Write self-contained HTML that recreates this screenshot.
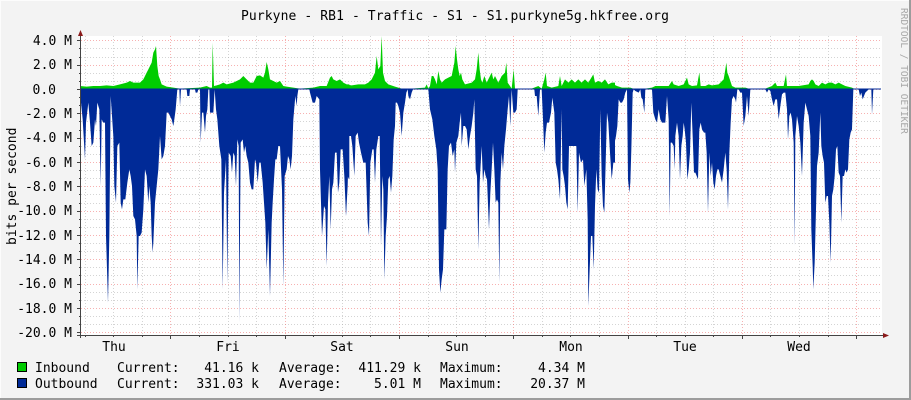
<!DOCTYPE html>
<html><head><meta charset="utf-8"><style>
html,body{margin:0;padding:0;background:#f3f3f3}
svg{display:block}
text{font-family:"DejaVu Sans Mono","Liberation Mono",monospace;font-size:13px;fill:#000}
</style></head><body>
<svg width="911" height="400" viewBox="0 0 911 400" xmlns="http://www.w3.org/2000/svg">
<rect x="0" y="0" width="911" height="400" fill="#f3f3f3"/>
<rect x="909" y="0" width="2" height="400" fill="#9c9c9c"/>
<rect x="0" y="398" width="911" height="2" fill="#9c9c9c"/>
<rect x="0" y="0" width="909" height="1" fill="#fcfcfc"/>
<rect x="0" y="0" width="1" height="398" fill="#fcfcfc"/>
<rect x="81" y="36" width="801" height="299" fill="#ffffff"/>
<g id="grid2"></g>
<g transform="translate(80,36) scale(0.33333)">
<polygon fill="#00cc00" points="0,160 0,150 20,152 40,150 60,150 80,148 100,150 120,145 140,140 150,135 160,140 170,140 180,140 190,130 200,110 205,100 210,90 215,80 220,50 225,40 228,30 232,90 236,120 240,130 245,145 260,152 280,155 300,158 360,155 380,150 390,155 396,155 398,20 402,150 410,148 420,145 430,140 440,145 460,140 480,130 490,120 500,130 510,140 520,140 530,120 540,118 550,125 555,110 560,78 565,100 570,130 580,135 590,140 600,135 610,150 620,152 640,155 660,158 700,155 720,150 740,150 750,125 755,120 760,130 770,135 780,130 790,140 800,145 808,145 808,160"/>
<polygon fill="#002a97" points="0,160 3,200 8,250 15,370 18,260 25,200 30,260 35,330 40,320 45,250 48,270 52,200 58,220 62,450 65,250 70,260 75,260 78,600 84,800 88,600 92,180 96,240 100,300 103,450 108,500 112,330 118,320 122,500 126,520 130,490 136,490 142,440 148,400 152,420 156,450 160,540 165,550 170,600 172,760 176,600 180,600 185,590 190,520 195,400 200,420 205,500 208,450 212,500 215,600 218,650 220,620 225,500 230,450 235,400 240,300 245,370 250,360 255,330 260,230 265,230 270,240 275,250 280,270 283,250 287,220 292,160 298,160 300,210 303,160 320,160 322,180 328,180 330,160 345,160 347,170 352,170 355,160 360,160 362,320 366,230 370,230 375,290 378,240 382,220 385,160 388,160 390,230 395,230 400,230 404,160 408,220 412,250 418,330 424,370 428,760 432,470 438,370 442,740 446,350 452,360 456,410 460,350 464,360 468,450 472,310 476,330 478,860 482,320 488,310 492,350 496,330 500,360 505,380 510,440 515,460 520,460 525,370 528,380 533,440 538,380 542,380 548,440 552,500 556,560 560,700 565,580 570,780 575,560 578,500 582,430 586,370 590,370 595,330 600,330 606,460 610,750 614,420 620,400 624,360 628,370 632,400 636,360 640,250 646,180 650,210 652,180 655,160 688,160 690,170 698,200 705,200 710,180 718,190 720,400 726,600 732,510 736,520 740,690 744,500 748,420 752,580 756,460 760,440 765,350 770,350 774,470 778,440 782,340 788,340 793,420 798,540 802,420 808,430 808,160"/>
</g>
<g transform="translate(345,36) scale(0.33333)">
<polygon fill="#00cc00" points="0,160 0,145 20,148 40,145 60,145 70,140 80,130 90,110 95,60 100,100 106,90 110,0 114,110 120,135 130,145 150,152 170,158 200,158 240,155 245,145 250,158 255,150 260,120 265,120 270,130 275,145 280,105 285,130 290,140 300,130 310,125 320,120 328,80 332,30 336,70 340,100 344,120 348,110 352,130 360,145 380,140 390,130 395,100 400,50 404,100 408,130 412,140 418,120 425,140 435,120 440,110 445,130 450,120 460,140 470,120 480,110 484,80 488,140 495,150 500,158 506,100 510,158 560,158 580,150 590,158 598,130 602,110 606,150 620,155 640,150 645,120 650,150 660,130 670,140 680,130 690,140 700,130 710,140 720,130 730,140 745,115 750,140 760,135 770,140 780,130 790,145 800,140 810,140 810,160"/>
<polygon fill="#002a97" points="0,160 0,350 3,540 8,450 12,300 18,300 22,330 28,420 32,300 38,290 42,320 48,350 55,380 62,380 68,560 72,600 76,380 82,340 86,340 90,440 94,340 100,300 104,300 108,630 112,420 115,460 118,730 122,600 126,540 130,430 134,420 138,470 142,420 146,310 150,270 152,200 156,200 160,210 165,230 170,300 175,230 180,200 184,170 188,160 190,180 195,190 200,170 204,160 250,160 255,220 262,250 268,300 274,340 278,400 282,700 286,770 290,730 294,700 298,580 304,580 308,400 312,330 318,320 323,360 328,340 330,410 334,320 340,300 344,260 348,230 350,330 355,270 360,270 365,280 370,340 375,300 380,270 385,230 388,190 392,400 396,420 400,640 404,440 410,330 414,440 418,400 422,420 426,430 432,580 436,470 440,400 444,320 448,400 452,500 456,490 460,500 463,740 466,440 470,350 474,400 478,330 483,280 488,220 492,180 496,270 500,160 505,230 510,230 515,220 518,160 568,160 570,180 575,180 580,240 585,160 590,160 594,250 598,350 602,290 606,260 612,260 618,230 622,185 628,230 632,380 636,400 640,430 645,490 650,220 652,400 656,420 660,450 664,500 668,520 672,330 680,330 690,330 694,330 698,530 702,350 708,380 714,370 718,450 724,400 728,550 730,810 734,700 738,600 742,600 746,700 750,510 754,400 758,460 762,470 766,220 770,420 774,510 778,530 782,380 786,230 790,260 795,350 800,430 805,380 810,380 810,160"/>
</g>
<g transform="translate(612,36) scale(0.33333)">
<polygon fill="#00cc00" points="0,160 0,140 5,145 15,150 30,155 45,155 55,155 70,160 100,158 120,155 130,150 150,150 170,150 180,135 185,145 200,150 215,145 225,125 230,145 240,150 255,148 262,110 266,150 280,150 290,145 300,148 320,145 330,135 335,130 340,100 343,80 346,110 350,120 355,135 360,150 370,155 380,155 400,155 410,158 420,160 460,158 480,150 490,140 495,150 515,150 522,115 525,150 540,150 560,150 590,145 595,135 600,130 605,135 610,145 620,150 630,140 640,145 650,140 660,140 670,145 680,140 690,145 700,150 720,155 730,160"/>
<polygon fill="#002a97" points="0,160 0,420 4,370 8,320 12,300 16,270 20,190 25,200 30,200 35,190 40,170 45,160 48,430 52,470 55,440 58,340 62,170 65,160 70,165 80,170 85,160 88,185 92,190 97,230 100,160 120,160 124,230 130,250 135,260 140,220 145,250 150,260 155,260 160,260 165,180 170,250 173,540 176,320 180,320 185,330 188,400 190,300 195,260 200,300 204,430 208,330 212,300 215,260 218,280 222,320 226,430 230,400 234,350 238,200 242,300 246,410 250,410 254,420 258,430 262,280 266,260 270,280 276,290 280,290 284,350 288,530 292,350 296,420 300,380 304,440 308,460 312,420 316,400 320,400 325,420 330,440 335,400 340,350 344,400 348,520 352,350 356,260 360,190 365,180 370,190 372,200 376,160 380,160 385,170 390,170 395,270 400,240 405,180 410,240 415,160 460,160 465,170 470,160 475,165 480,190 485,210 490,190 495,190 500,250 505,210 510,175 515,170 520,170 525,220 528,310 532,240 536,230 540,250 545,320 548,630 550,300 555,240 560,270 565,320 570,420 575,260 580,200 585,220 590,240 595,300 598,580 602,690 604,760 608,680 612,520 615,390 620,350 625,230 628,330 632,360 636,380 640,500 644,480 648,480 652,560 656,680 660,480 664,460 668,420 672,340 676,330 680,410 684,420 688,560 692,420 696,420 700,400 704,410 708,400 712,310 716,290 720,280 724,160 740,160 744,180 748,170 752,190 756,180 760,170 770,160 778,160 780,235 784,160 810,160"/>
</g>
<line x1="81" y1="89" x2="881" y2="89" stroke="#002a97" stroke-width="1"/>
<line x1="80.5" y1="32" x2="80.5" y2="338" stroke="#444" stroke-width="1"/>
<line x1="77" y1="335.5" x2="884" y2="335.5" stroke="#444" stroke-width="1"/>
<polygon points="78,36 83,36 80.5,30" fill="#8b1a1a"/>
<polygon points="883,333 883,338 889,335.5" fill="#8b1a1a"/>
<g id="ticks" stroke="#444" stroke-width="1"></g>
<text x="455" y="20" text-anchor="middle" style="letter-spacing:0.1px">Purkyne - RB1 - Traffic - S1 - S1.purkyne5g.hkfree.org</text>
<text transform="translate(901,8) rotate(90)" style="font-size:9.5px;fill:#a8a8a8">RRDTOOL / TOBI OETIKER</text>
<text transform="translate(16,245) rotate(-90)">bits per second</text>
<g text-anchor="end">
<text x="72" y="45">4.0 M</text>
<text x="72" y="69">2.0 M</text>
<text x="56" y="94">0.0</text>
<text x="72" y="118">-2.0 M</text>
<text x="72" y="142">-4.0 M</text>
<text x="72" y="167">-6.0 M</text>
<text x="72" y="191">-8.0 M</text>
<text x="72" y="215">-10.0 M</text>
<text x="72" y="240">-12.0 M</text>
<text x="72" y="264">-14.0 M</text>
<text x="72" y="288">-16.0 M</text>
<text x="72" y="313">-18.0 M</text>
<text x="72" y="337">-20.0 M</text>
</g>
<g text-anchor="middle">
<text x="114" y="351">Thu</text>
<text x="228" y="351">Fri</text>
<text x="342" y="351">Sat</text>
<text x="457" y="351">Sun</text>
<text x="571" y="351">Mon</text>
<text x="685" y="351">Tue</text>
<text x="799" y="351">Wed</text>
</g>
<rect x="17.5" y="362.5" width="9" height="9" fill="#00cc00" stroke="#000"/>
<rect x="17.5" y="378.5" width="9" height="9" fill="#002a97" stroke="#000"/>
<text x="35" y="372">Inbound</text>
<text x="117" y="372">Current:</text>
<text x="259" y="372" text-anchor="end">41.16 k</text>
<text x="279" y="372">Average:</text>
<text x="421" y="372" text-anchor="end">411.29 k</text>
<text x="440" y="372">Maximum:</text>
<text x="585" y="372" text-anchor="end">4.34 M</text>
<text x="35" y="388">Outbound</text>
<text x="117" y="388">Current:</text>
<text x="259" y="388" text-anchor="end">331.03 k</text>
<text x="279" y="388">Average:</text>
<text x="421" y="388" text-anchor="end">5.01 M</text>
<text x="440" y="388">Maximum:</text>
<text x="585" y="388" text-anchor="end">20.37 M</text>
<script>
(function(){
var ns="http://www.w3.org/2000/svg";
var g=document.getElementById("grid2");var t=document.getElementById("ticks");
function L(p,x1,y1,x2,y2,c,d){var l=document.createElementNS(ns,"line");l.setAttribute("x1",x1);l.setAttribute("y1",y1);l.setAttribute("x2",x2);l.setAttribute("y2",y2);if(c)l.setAttribute("stroke",c);if(d)l.setAttribute("stroke-dasharray",d);l.setAttribute("stroke-width","1");p.appendChild(l);}
for(var i=0;i<=36;i++){var y=Math.round(40.3+i*8.11)+0.5;var maj=(i%3==0);
L(g,81,y,881,y,maj?"rgba(240,100,100,0.5)":"rgba(170,170,170,0.5)","1,2");
if(maj)L(t,77,y,81,y);else L(t,79,y,81,y);}
for(var k=0;k<28;k++){var x=Math.round(84.7+k*28.57)+0.5;if(x>881)break;var maj=((k-3)%4==0);
L(g,x,36,x,335,maj?"rgba(240,100,100,0.5)":"rgba(170,170,170,0.5)","1,2");
L(t,x,335,x,maj?339:337);}
})();
</script>
</svg>
</body></html>
